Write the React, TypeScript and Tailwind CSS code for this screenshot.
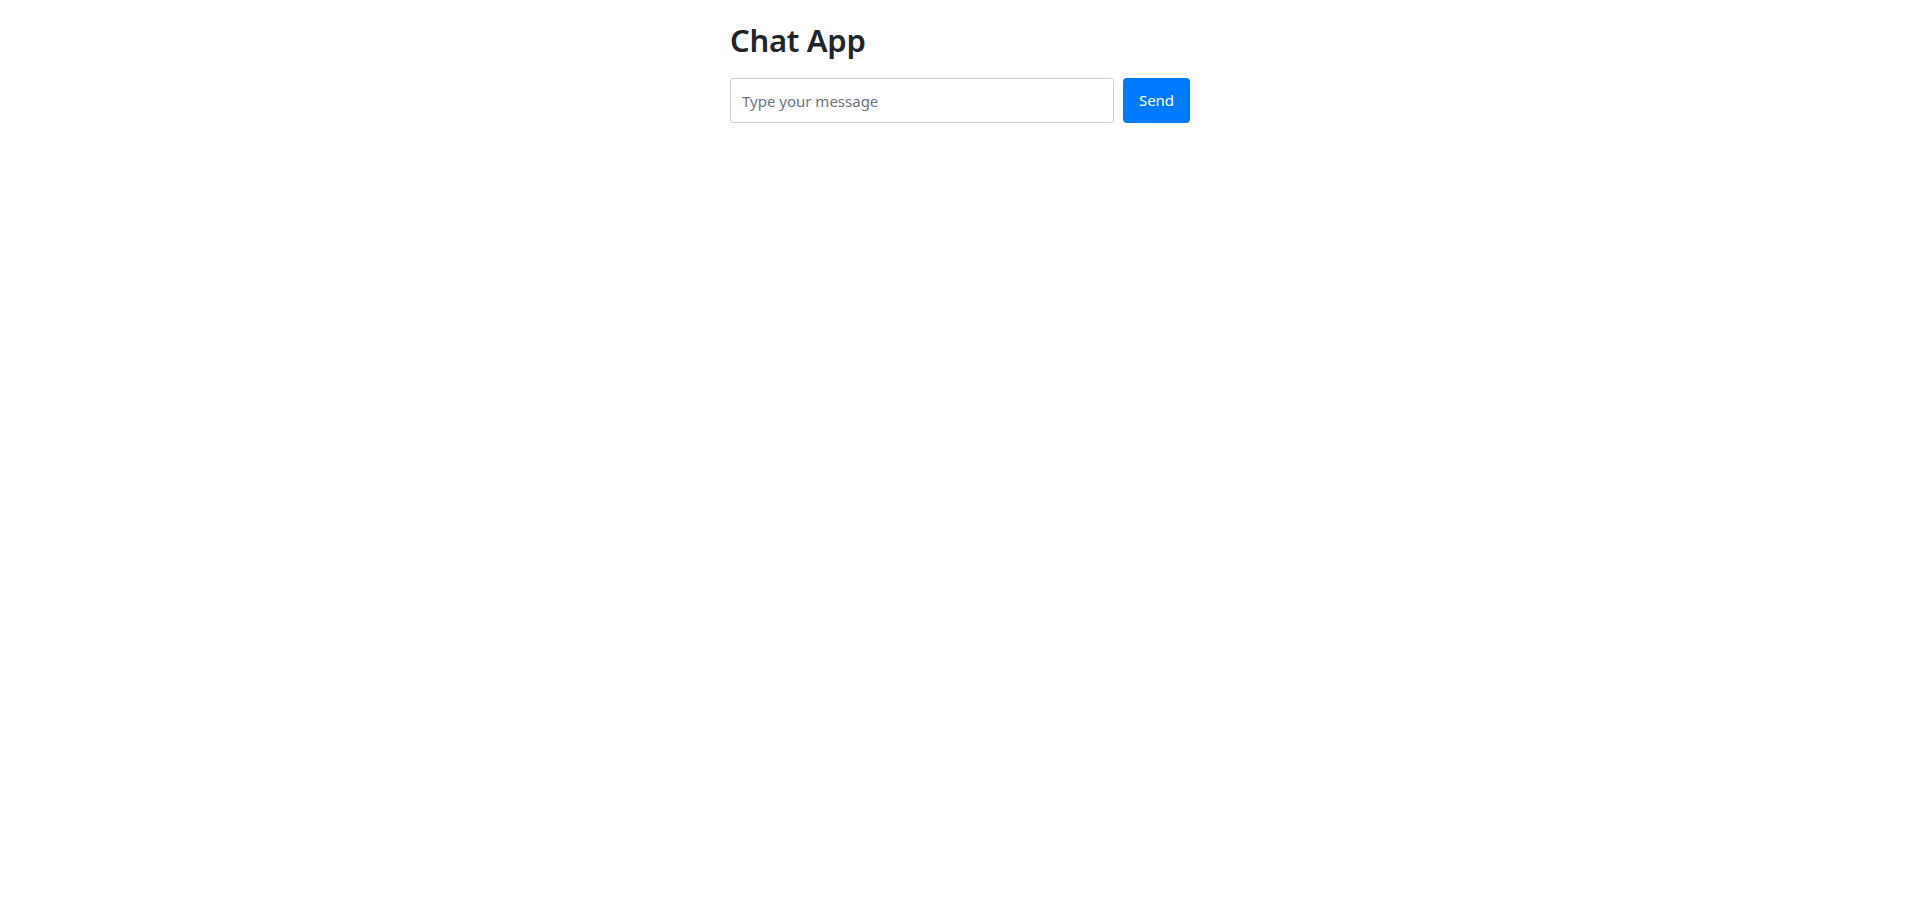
import React, { useState } from 'react';

function App() {
  const [message, setMessage] = useState('');

  return (
    <div className="min-h-screen bg-white text-[#212529] font-['Noto_Sans',sans-serif]">
      <div className="w-[460px] mx-auto pt-[20px]">
        <h1 className="text-[31px] leading-[40px] font-semibold tracking-[-0.3px]">Chat App</h1>
        <div className="flex gap-[9px] mt-[18px]">
          <input
            value={message}
            onChange={(e) => setMessage(e.target.value)}
            placeholder="Type your message"
            className="flex-1 h-[45px] px-[11px] border border-[#cfcfcf] rounded-[3px] text-[15px] placeholder:text-[#6c757d] outline-none"
          />
          <button className="w-[67px] h-[45px] bg-[#007bff] text-white text-[15px] rounded-[4px]">
            Send
          </button>
        </div>
      </div>
    </div>
  );
}

export default App;
